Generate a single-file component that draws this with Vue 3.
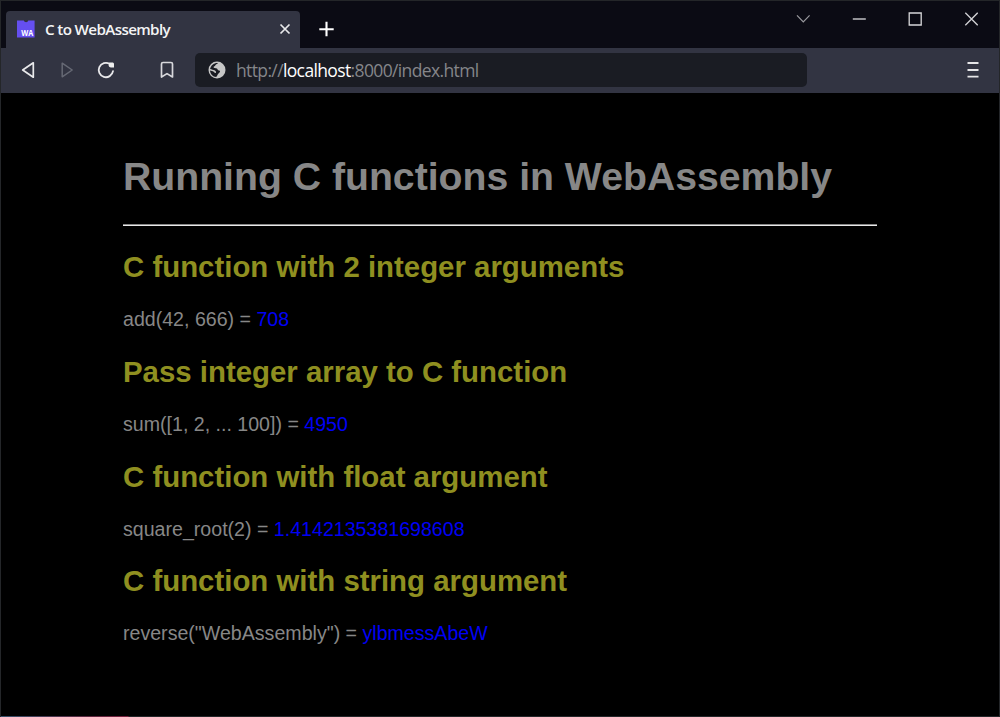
<script setup>
const examples = [
  { title: 'C function with 2 integer arguments', call: 'add(42, 666) = ', result: '708' },
  { title: 'Pass integer array to C function', call: 'sum([1, 2, ... 100]) = ', result: '4950' },
  { title: 'C function with float argument', call: 'square_root(2) = ', result: '1.4142135381698608' },
  { title: 'C function with string argument', call: 'reverse("WebAssembly") = ', result: 'ylbmessAbeW' },
]
</script>

<template>
  <div class="window">
    <header class="tabs">
      <div class="tab">
        <svg class="favicon" width="18" height="18" viewBox="0 0 18 18">
          <path d="M0 .4H6.8A2.3 2.3 0 0 0 11.3 .4H17.6V17.6H0Z" fill="#654ff0" />
          <text x="4.2" y="15.8" textLength="12" lengthAdjust="spacingAndGlyphs">WA</text>
        </svg>
        <span class="title">C to WebAssembly</span>
        <svg class="close" width="12" height="12" viewBox="0 0 12 12"><path d="M1.5 1.5 10.5 10.5M10.5 1.5 1.5 10.5" stroke="#e8e8ea" stroke-width="1.7" /></svg>
      </div>
      <svg class="plus" width="16" height="16" viewBox="0 0 16 16"><path d="M7.5 .8V15.2M.3 8.2H14.7" stroke="#fff" stroke-width="2.1" /></svg>
      <div class="controls">
        <svg width="14" height="14" viewBox="0 0 14 14"><path d="M1 3.3 7.3 9.8 13.6 3.3" stroke="#9a9a9f" stroke-width="1.2" /></svg>
        <svg width="14" height="14" viewBox="0 0 14 14"><path d="M.8 7H13.8" stroke="#b5b5b9" stroke-width="1.6" /></svg>
        <svg width="14" height="14" viewBox="0 0 14 14"><path d="M1.2 1H13.2V13H1.2Z" stroke="#d8d8da" stroke-width="1.3" /></svg>
        <svg width="14" height="14" viewBox="0 0 14 14"><path d="M1.3 .8 13.7 13.2M13.7 .8 1.3 13.2" stroke="#d0d0d3" stroke-width="1.3" /></svg>
      </div>
    </header>
    <nav class="toolbar">
      <svg width="14" height="18" viewBox="0 0 14 18"><path d="M12.3 1.8V16.2L1.7 9Z" stroke="#e9e9eb" stroke-width="1.7" stroke-linejoin="round" /></svg>
      <svg class="forward" width="14" height="18" viewBox="0 0 14 18"><path d="M2.2 2.2V15.8L12.2 9Z" stroke="#666974" stroke-width="1.5" stroke-linejoin="round" /></svg>
      <svg class="reload" width="18" height="18" viewBox="0 0 18 18">
        <path d="M12.7 2.9A7.2 7.2 0 1 0 16 10.2" stroke="#e9e9eb" stroke-width="1.8" stroke-linecap="round" />
        <path d="M12.2 1.6H15.8Q17 1.8 17 3V6.6H13.8Q12.2 6.2 11.6 4.7Z" fill="#eee" />
      </svg>
      <svg class="bookmark" width="14" height="18" viewBox="0 0 14 18"><path d="M1.5 3Q1.5 1.5 3 1.5H11Q12.5 1.5 12.5 3V16L7 12.6 1.5 16Z" stroke="#d8d8dc" stroke-width="1.7" stroke-linejoin="round" /></svg>
      <div class="address">
        <svg width="18" height="18" viewBox="0 0 18 18">
          <circle cx="9" cy="9" r="8.5" fill="#c6c6c6" />
          <path d="M10.1 1.9C9.2 2.8 7.3 3.4 7.2 4.6 7.1 5.6 5.7 5 5.6 6.2 5.5 7.4 8.2 6.8 9.2 7.8 10.1 8.7 9.6 9.4 11 9.5 12.5 9.6 12.3 11.3 11 12 9.8 12.6 9.8 14.4 8.2 15.9 4.8 15.7 2.3 12.9 2 9.4L4.8 10.3C6.5 10.8 6.2 12.3 7.4 12.1 8.5 11.9 8.2 10.2 7 9.5 5.5 8.7 3.5 8.5 2.1 8 2.8 4.2 6 1.6 10.1 1.9Z" fill="#1a1c23" />
        </svg>
        <span class="url">http://<b>localhost</b>:8000/index.html</span>
      </div>
      <svg class="menu" width="12" height="18" viewBox="0 0 12 18"><path d="M.5 2H11.5M.5 9H11.5M.5 15.6H11.5" stroke="#e5e5e7" stroke-width="1.9" /></svg>
    </nav>
    <main>
      <h1>Running C functions in WebAssembly</h1>
      <div class="rule"></div>
      <section v-for="item in examples" :key="item.title">
        <h2>{{ item.title }}</h2>
        <p>{{ item.call }}<span>{{ item.result }}</span></p>
      </section>
    </main>
    <div class="bottom-edge"></div>
  </div>
</template>

<style>
body { background: #000; overflow: hidden; }
</style>

<style scoped>
.window { position: relative; box-sizing: border-box; width: 1000px; height: 717px; background: #000; border: 1px solid #242629; border-bottom: 0; overflow: hidden; font-family: "Liberation Sans", Arial, sans-serif; }
svg { display: block; flex: none; fill: none; }
.tabs { height: 47px; display: flex; background: #0b0b14; }
.tab { box-sizing: border-box; width: 294px; height: 37px; margin: 10px 0 0 5px; padding: 0 9px 2px 11px; display: flex; align-items: center; background: #323442; border-radius: 4px 4px 0 0; }
.favicon text { font: bold 8.4px "Open Sans", sans-serif; fill: #fff; }
.title { margin-left: 10px; color: #f4f4f5; font: 600 15.2px/20px "Open Sans", sans-serif; letter-spacing: -.64px; white-space: nowrap; }
.close { margin-left: auto; }
.plus { margin: 20px 0 0 19px; }
.controls { margin: 11px 21px 0 auto; display: flex; gap: 42px; }
.toolbar { box-sizing: border-box; height: 45px; padding: 0 20px 2px; display: flex; align-items: center; background: #323442; }
.forward { margin-left: 25px; }
.reload { margin-left: 23px; }
.bookmark { margin-left: 45px; }
.address { box-sizing: border-box; width: 612px; height: 34px; margin: 0 0 0 21px; padding-left: 13px; display: flex; align-items: center; background: #1a1c23; border-radius: 5px; }
.url { margin-left: 10px; color: #85868a; font: 17.5px/24px "Open Sans", sans-serif; letter-spacing: -.63px; white-space: nowrap; }
.url b { color: #fff; font-weight: 400; }
.menu { margin-left: auto; margin-right: 0; }
main { padding: 59px 122px 0; color: #878787; }
h1 { margin: 0; font-size: 39.2px; line-height: 50px; white-space: nowrap; }
.rule { height: 1px; margin: 22px 0 24px; background: #e8e8e8; border-top: 1px solid #858585; }
section { height: 104.8px; }
h2 { margin: 0; color: #8f8f20; font-size: 29.4px; line-height: 34px; white-space: nowrap; }
p { margin: 24px 0 0; font-size: 19.6px; line-height: 22px; white-space: nowrap; }
p span { color: #0000f5; }
.bottom-edge { position: absolute; left: 0; right: 0; bottom: 0; height: 1px; background: linear-gradient(90deg, #35516b, #5b263d 90px, #77203d 127px, #242629 128px); }
</style>
